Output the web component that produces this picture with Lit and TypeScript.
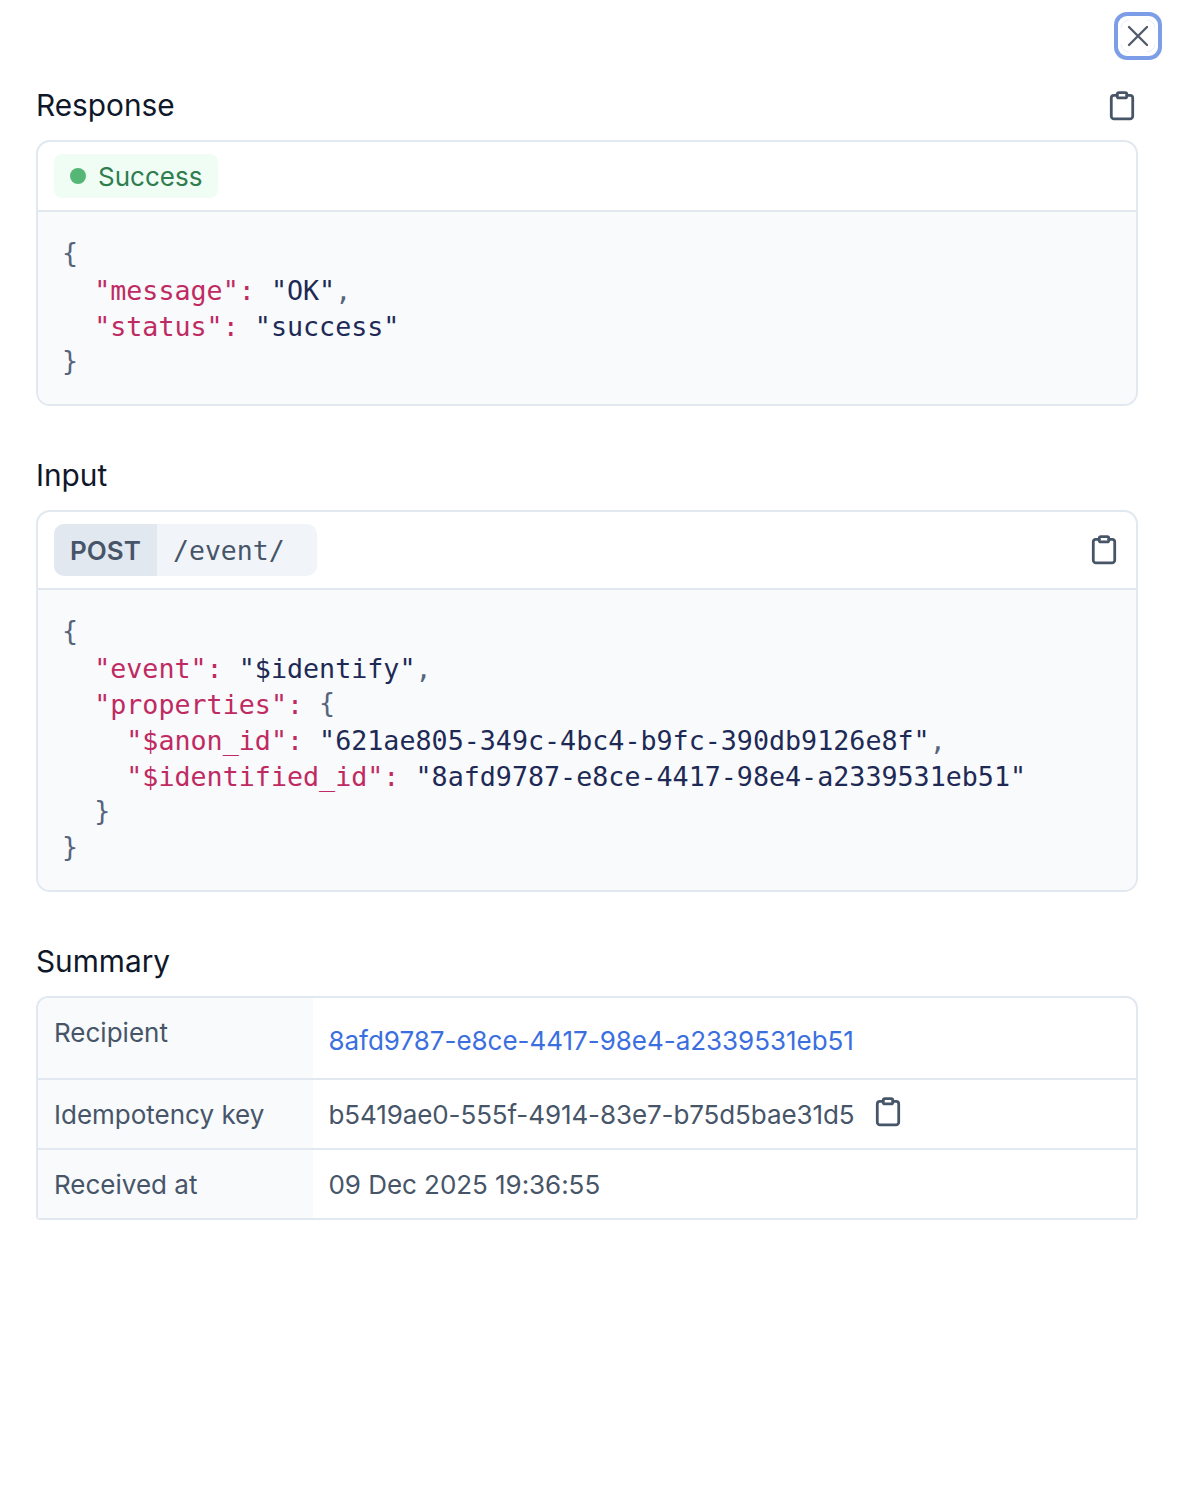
import { LitElement, html, css } from "lit";
import { customElement } from "lit/decorators.js";

const clip = html`<svg class="clip" viewBox="0 0 24 28" width="26" height="30" fill="none" stroke="#475569" stroke-width="2.6" stroke-linejoin="round" stroke-linecap="round">
  <path d="M7.5 4H4.5A2.5 2.5 0 0 0 2 6.5V23.5A2.5 2.5 0 0 0 4.5 26H19.5A2.5 2.5 0 0 0 22 23.5V6.5A2.5 2.5 0 0 0 19.5 4H16.5" />
  <rect x="7.5" y="1.5" width="9" height="5" rx="1.6" />
</svg>`;

@customElement("app-root")
export class AppRoot extends LitElement {
  static styles = css`
    :host { display: block; background: #fff; min-height: 1500px; font-family: Inter, "Liberation Sans", sans-serif; color: #0f172a; }
    .page { padding: 12px 48px 0 36px; display: flex; flex-direction: column; }
    .top { display: flex; justify-content: flex-end; margin-right: -24px; }
    .close { width: 48px; height: 48px; box-sizing: border-box; border: 4px solid #7c9ee9; border-radius: 13px; background: #fff; display: flex; align-items: center; justify-content: center; padding: 0; }
    .title-row { display: flex; justify-content: space-between; align-items: center; height: 40px; margin-top: 25px; }
    .title-row.next { margin-top: 49px; }
    .title-row.last { margin-top: 49px; }
    .title { font-size: 29.8px; line-height: 40px; }
    .title-row .clip { margin-right: 3px; position: relative; top: 1px; }
    .card { border: 2px solid #e2e8f0; border-radius: 14px; margin-top: 15px; overflow: hidden; background: #fff; }
    .head { display: flex; justify-content: space-between; align-items: center; padding: 12px 19px 12px 16px; border-bottom: 2px solid #e2e8f0; }
    .badge { display: flex; align-items: center; gap: 12px; height: 44px; padding: 0 16px; background: #f0fdf4; border-radius: 8px; color: #2f7d4f; font-size: 26px; }
    .dot { width: 16px; height: 16px; border-radius: 50%; background: #55b675; }
    .method { display: flex; height: 52px; background: #f1f5f9; border-radius: 10px; overflow: hidden; }
    .verb { width: 103px; display: flex; align-items: center; justify-content: center; background: #e2e8f0; color: #475569; font-size: 26px; font-weight: 600; }
    .path { padding: 0 32px 0 16px; display: flex; align-items: center; color: #475569; font: 26.5px "DejaVu Sans Mono", monospace; }
    pre { margin: 0; padding: 25px 24px 23px; background: #f8fafc; font: 26.7px/36px "DejaVu Sans Mono", monospace; color: #1e2a55; }
    .k { color: #c02a63; }
    .p { color: #56647c; }
    .b { color: #56647c; position: relative; top: -2px; }
    .table { margin-top: 15px; border: 2px solid #e2e8f0; border-bottom: 0; border-radius: 12px 12px 4px 4px; overflow: hidden; font-size: 26px; color: #475569; }
    .row { display: grid; grid-template-columns: 275px 1fr; border-bottom: 2px solid #e2e8f0; }
    .l { background: #f8fafc; padding: 18px 16px 16px; line-height: 34px; }
    .v { padding: 18px 16px 16px 15.5px; line-height: 34px; display: flex; align-items: center; gap: 21px; }
    .v .clip { position: relative; top: -3px; }
    .link { color: #3b6fe0; letter-spacing: -0.03px; }
    .key { letter-spacing: -0.1px; }
    .date { letter-spacing: -0.05px; }
    .r1 .l { padding: 18px 16px 28px; }
    .r1 .v { padding: 26px 16px 20px 15.5px; }
  `;

  render() {
    return html`<div class="page">
      <div class="top"><button class="close" aria-label="Close">
        <svg width="40" height="40" viewBox="0 0 40 40" fill="none">
          <path d="M3 12A8 8 0 0 1 11 4M29 4A8 8 0 0 1 37 12M37 28A8 8 0 0 1 29 36M11 36A8 8 0 0 1 3 28" stroke="#e8eefb" stroke-width="1"/>
          <path d="M11 11L29 29M29 11L11 29" stroke="#525c6c" stroke-width="2.4" stroke-linecap="round"/>
        </svg>
      </button></div>
      <div class="title-row"><div class="title">Response</div>${clip}</div>
      <div class="card">
        <div class="head"><div class="badge"><span class="dot"></span>Success</div></div>
<pre><span class="b">{</span>
  <span class="k">"message":</span> "OK"<span class="p">,</span>
  <span class="k">"status":</span> "success"
<span class="b">}</span></pre>
      </div>
      <div class="title-row next"><div class="title">Input</div></div>
      <div class="card">
        <div class="head"><div class="method"><span class="verb">POST</span><span class="path">/event/</span></div>${clip}</div>
<pre><span class="b">{</span>
  <span class="k">"event":</span> "$identify"<span class="p">,</span>
  <span class="k">"properties":</span> <span class="b">{</span>
    <span class="k">"$anon_id":</span> "621ae805-349c-4bc4-b9fc-390db9126e8f"<span class="p">,</span>
    <span class="k">"$identified_id":</span> "8afd9787-e8ce-4417-98e4-a2339531eb51"
  <span class="b">}</span>
<span class="b">}</span></pre>
      </div>
      <div class="title-row last"><div class="title">Summary</div></div>
      <div class="table">
        <div class="row r1"><div class="l">Recipient</div><div class="v"><span class="link">8afd9787-e8ce-4417-98e4-a2339531eb51</span></div></div>
        <div class="row"><div class="l">Idempotency key</div><div class="v"><span class="key">b5419ae0-555f-4914-83e7-b75d5bae31d5</span>${clip}</div></div>
        <div class="row"><div class="l">Received at</div><div class="v"><span class="date">09 Dec 2025 19:36:55</span></div></div>
      </div>
    </div>`;
  }
}
